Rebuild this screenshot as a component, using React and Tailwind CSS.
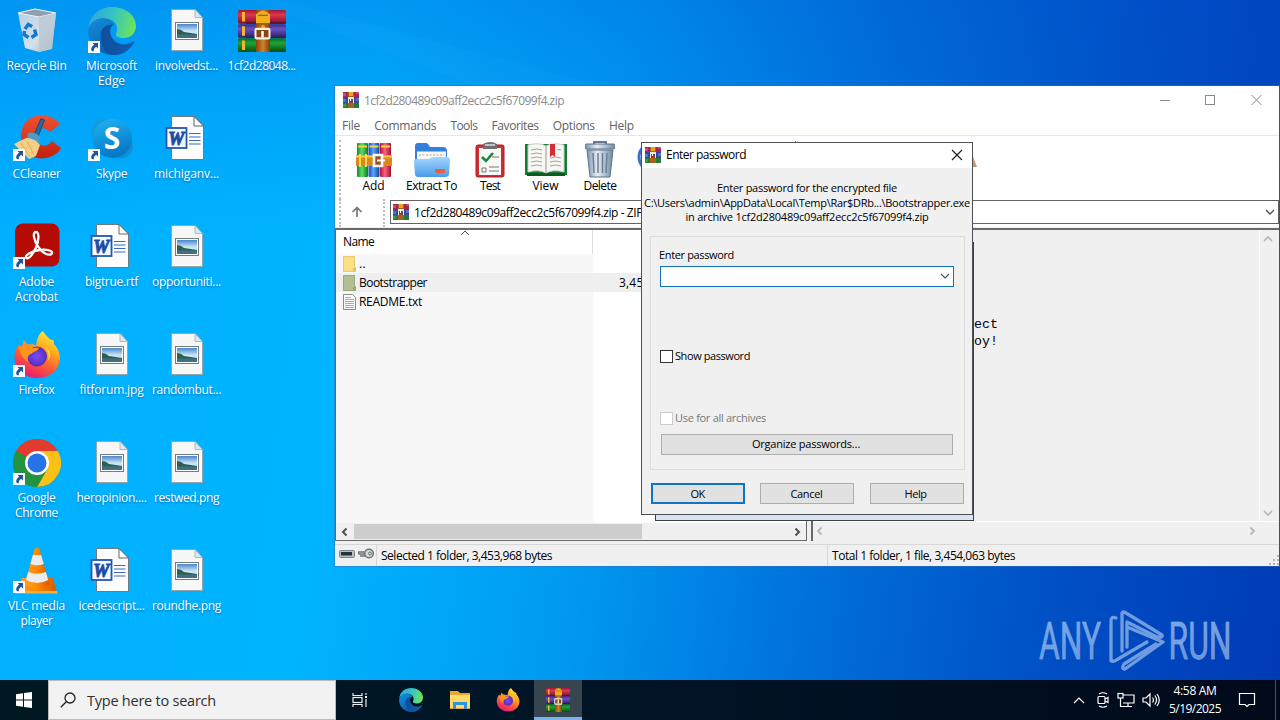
import React, { useLayoutEffect, useRef } from "react";

/* Single line of text whose tracking is adjusted to fill a given width. */
function Fit({ w, children, className = "" }) {
  const ref = useRef(null);
  useLayoutEffect(() => {
    const el = ref.current;
    el.style.letterSpacing = "0px";
    const natural = el.getBoundingClientRect().width;
    el.style.letterSpacing = `${(w - natural) / children.length}px`;
  }, [w, children]);
  return (
    <span className={`inline-block whitespace-pre ${className}`}>
      <span ref={ref}>{children}</span>
    </span>
  );
}

function Books({ className }) {
  return (
    <svg viewBox="0 0 48 40" preserveAspectRatio="none" className={className}>
      <defs>
        <linearGradient id="bkR" x2="0" y2="1"><stop stopColor="#a01838" /><stop offset=".35" stopColor="#e0364f" /><stop offset="1" stopColor="#7c0f2a" /></linearGradient>
        <linearGradient id="bkB" x2="0" y2="1"><stop stopColor="#3d2a80" /><stop offset=".35" stopColor="#6a50c0" /><stop offset="1" stopColor="#2c1c66" /></linearGradient>
        <linearGradient id="bkG" x2="0" y2="1"><stop stopColor="#0c6a1c" /><stop offset=".35" stopColor="#1fa63a" /><stop offset="1" stopColor="#064a12" /></linearGradient>
        <linearGradient id="belt" x2="1" y2="0"><stop stopColor="#8a460c" /><stop offset=".5" stopColor="#d1802c" /><stop offset="1" stopColor="#7e3c0a" /></linearGradient>
      </defs>
      <rect width="48" height="13" rx="1.500" fill="url(#bkR)" />
      <rect y="13.500" width="48" height="13" rx="1.500" fill="url(#bkB)" />
      <rect y="27" width="48" height="13" rx="1.500" fill="url(#bkG)" />
      <path d="M5.500 2v9M5.500 15.500v9M5.500 29v9" stroke="#f2b632" strokeWidth="3" />
      <path d="M8 12.500h40M8 26h40" stroke="#1b1433" strokeWidth="1" opacity=".7" />
      <rect x="18" width="14" height="40" fill="url(#belt)" />
      <path d="M18 4q7-6 14 0v9H18z" fill="#efb01e" />
      <path d="M20 5h10M18 13h14" stroke="#8a4a0c" />
      <circle cx="25" cy="16" r="2.500" fill="#e8a01a" stroke="#8a4a0c" strokeWidth=".8" />
      <rect x="17.500" y="18" width="14" height="9" rx="1" fill="#8c4510" stroke="#f6f1e6" strokeWidth="2" />
      <path d="M24.500 20v6" stroke="#fff" strokeWidth="2.500" />
    </svg>
  );
}

function MiniBooks({ className }) {
  return (
    <svg viewBox="0 0 16 16" className={className} shapeRendering="crispEdges">
      <rect width="16" height="5" fill="#a32552" />
      <rect y="5" width="16" height="6" fill="#34489f" />
      <rect y="11" width="16" height="5" fill="#247b35" />
      <path d="M0 1h3v3H0zM13 0h3v2h-3z" fill="#d84862" />
      <path d="M0 7h3v3H0zM13 6h3v3h-3z" fill="#5c70c9" />
      <path d="M0 12h3v3H0z" fill="#3a9a44" />
      <rect x="5" width="6" height="16" fill="#a9621d" />
      <rect x="6" width="4" height="4" fill="#e9a51f" />
      <path d="M5 5h6v6H5z" fill="#efe9df" />
      <rect x="6" y="7" width="4" height="4" fill="#7b4235" />
      <rect x="7" y="6" width="1" height="3" fill="#fff" />
    </svg>
  );
}

function Shortcut() {
  return (
    <svg viewBox="0 0 12 12" className="absolute bottom-0.5 left-0 h-3 w-3">
      <rect width="12" height="12" fill="#fbfbfb" />
      <path d="M4.500 2h5.500v5.500L8.200 5.800C6.300 7 5.600 8.400 5.700 10.500L3.500 9.800C2.600 7.400 3.700 5.200 6.200 3.700z" fill="#22549c" />
    </svg>
  );
}

function Bin() {
  return (
    <svg viewBox="0 0 48 48" className="h-12 w-12">
      <defs><linearGradient id="binG" x2="1" y2="1"><stop stopColor="#c3d3e0" /><stop offset=".6" stopColor="#e3e6e9" /><stop offset="1" stopColor="#a9b2bc" /></linearGradient></defs>
      <path d="M5 6l17-4 21 4-4 36-13 3-14-4z" fill="url(#binG)" opacity=".93" />
      <path d="M5 6l17-4 21 4-17 4z" fill="#8f9faf" stroke="#eef3f7" strokeWidth="1.200" />
      <path d="M26 10l0 35 13-3 4-36z" fill="#b9c5d0" opacity=".75" />
      <g fill="none" stroke="#1479d0" strokeWidth="3.400">
        <path d="M12 22l3.200-4.500 4 2" /><path d="M21.500 22.500l1.500 5-4.500 3" /><path d="M15.500 30.500l-4.500-3 .5-3.500" />
      </g>
    </svg>
  );
}

function Edge({ className = "h-12 w-12" }) {
  return (
    <svg viewBox="0 0 48 48" className={className}>
      <defs>
        <linearGradient id="eT" x1="0" y1=".3" x2="1" y2=".5"><stop stopColor="#2fa6dd" /><stop offset=".5" stopColor="#38c3c2" /><stop offset="1" stopColor="#6be45a" /></linearGradient>
        <linearGradient id="eL" x2=".7" y2="1"><stop stopColor="#1390dc" /><stop offset="1" stopColor="#0a58a8" /></linearGradient>
        <linearGradient id="eD" x2="1" y2="0"><stop stopColor="#0d4f9d" /><stop offset="1" stopColor="#155cae" /></linearGradient>
      </defs>
      <path d="M.5 21C1.500 8 12 0 24.500 0 38 0 48 9 48 19c0 7-5 12-12 12-6 0-9-2-8-4.500 3-5 .5-12-6-14C14 10 4 13 .5 21z" fill="url(#eT)" />
      <path d="M.3 22C4 12 14 9 21 12.500c4 2 5.500 4 5.500 5.500-7-1-9 7-6 13 3 8 10 12 20 10C34 48 26 49 20 47.500 6 44-1 33 .3 22z" fill="url(#eL)" />
      <path d="M13 26c1-6 7-9 13-8-7 3-4 15 5 18.500 5 2 10 .5 14-2 1-.5 2 .5 1 1.500C41 44 33 49 24 48c-8-2-12-12-11-22z" fill="url(#eD)" />
    </svg>
  );
}

function Pic() {
  return (
    <svg viewBox="0 0 48 48" className="h-12 w-12">
      <defs><linearGradient id="sky" x2="0" y2="1"><stop stopColor="#4a86cc" /><stop offset=".5" stopColor="#c9e4f4" /></linearGradient></defs>
      <path d="M8.500 2.500H32l7.500 8V43.500h-31z" fill="#f7f7f7" stroke="#9a9a9a" strokeWidth=".8" />
      <path d="M32 2.500v8h7.500z" fill="#d5ebf6" stroke="#a9a9a9" strokeWidth=".8" />
      <rect x="12.500" y="15.500" width="23" height="17" fill="#fff" stroke="#727c85" />
      <rect x="14" y="17" width="20" height="14" fill="url(#sky)" />
      <path d="M14 22q4 0 7 3l13 2V28H14z" fill="#2e6049" /><path d="M14 27.500h20V31H14z" fill="#426f88" />
    </svg>
  );
}

function Word() {
  return (
    <svg viewBox="0 0 48 48" className="h-12 w-12">
      <path d="M8.500 1.500H31l9.500 9.500v33.500h-32z" fill="#fcfcfc" stroke="#6d7074" strokeWidth=".9" />
      <path d="M31 1.500V11h9.500z" fill="#fff" stroke="#555" strokeWidth=".9" />
      <path d="M26 18.500h11.500M26 22h11.500M26 25.500h11.500M26 29h11.500" stroke="#3b6bbd" strokeWidth="1.200" />
      <rect x="3.500" y="13" width="20" height="20" fill="#f4f8ff" stroke="#2457ac" strokeWidth="1.800" />
      <text x="13.200" y="29.500" textAnchor="middle" fontFamily="Liberation Serif, serif" fontWeight="700" fontStyle="italic" fontSize="18" fill="#1d4da3" stroke="#1d4da3" strokeWidth="1">W</text>
    </svg>
  );
}

function CCleaner() {
  return (
    <svg viewBox="0 0 48 48" className="h-12 w-12">
      <defs><linearGradient id="ccR" x2="0" y2="1"><stop stopColor="#f0512f" /><stop offset="1" stopColor="#c2200f" /></linearGradient></defs>
      <path d="M47 9C37-4 13-3 9 15c-4 18 8 31 24 28 6-1.500 12-4 15-10l-9-7c-5 8-16 5-16-4s9-12 14-5z" fill="url(#ccR)" />
      <path d="M28 3.500l3.500 1.500-7 18-4-2z" fill="#276a9d" stroke="#174a78" />
      <path d="M15 18q7-2 12 4l-1 6-12-4z" fill="#4a9bc9" />
      <path d="M1 29l12-6q9 0 14 7l-4 11-7 3z" fill="#f5cf86" /><path d="M8 28l9 14M14 26l7 14" stroke="#e2ad58" fill="none" />
    </svg>
  );
}

function Skype() {
  return (
    <svg viewBox="0 0 48 48" className="h-12 w-12">
      <defs><linearGradient id="skG" x2=".3" y2="1"><stop stopColor="#1fb4f2" /><stop offset="1" stopColor="#0679c6" /></linearGradient></defs>
      <circle cx="16" cy="16" r="12.500" fill="#159ade" /><circle cx="32.500" cy="31" r="12.500" fill="#128fd5" />
      <circle cx="24.500" cy="23.500" r="19.500" fill="url(#skG)" />
      <text x="24" y="34" textAnchor="middle" fontFamily="Open Sans, sans-serif" fontWeight="700" fontSize="30" fill="#fff">S</text>
    </svg>
  );
}

function Acrobat() {
  return (
    <svg viewBox="0 0 48 48" className="h-12 w-12">
      <rect x="2" y=".5" width="44.500" height="43" rx="8" fill="#b40c04" />
      <path d="M23 9c-4 0-2 9 2.500 15 3.500 6 10 9 13 7 2.500-3-4-5-12-4S12 32 13 34.500c2 3 7-3 10-10s3.500-15.500 0-15.500z" fill="none" stroke="#fff" strokeWidth="2.300" strokeLinejoin="round" />
    </svg>
  );
}

function Firefox({ className = "h-12 w-12" }) {
  return (
    <svg viewBox="0 0 48 48" className={className}>
      <defs>
        <linearGradient id="ffG" x1=".8" y1="0" x2=".3" y2="1"><stop stopColor="#fff044" /><stop offset=".35" stopColor="#ffa91f" /><stop offset=".65" stopColor="#ff5a35" /><stop offset="1" stopColor="#e8157c" /></linearGradient>
        <radialGradient id="ffP"><stop stopColor="#7a4bf5" /><stop offset="1" stopColor="#5a2cb8" /></radialGradient>
      </defs>
      <path d="M30 0c3 5 5 6 8 9 3-1 3 2 3 4 5 5 6 11 6 15-1 12-11 19-22.500 19S2 40 1.500 27c0-6 2-11 5-14 .5 2 1 2 2 3L11 9q2 4 5 4.500c3-.5 5 0 7 1C24 9 25 3 30 0z" fill="url(#ffG)" />
      <circle cx="24" cy="25.500" r="10" fill="url(#ffP)" />
      <path d="M6 17c5-4 11-3 14 0l6-.5c-1 4-6 4-7 6-5 1-5 6-3 9-5-3-9-8-10-14.500z" fill="#ff941d" />
      <path d="M31 16c5 3 5 9 4 14 4-6 2-13-4-14z" fill="#ffd93c" />
    </svg>
  );
}

function Chrome() {
  return (
    <svg viewBox="0 0 48 48" className="h-12 w-12">
      <circle cx="24" cy="24" r="24" fill="#24933f" />
      <path d="M24 24L3.200 12A24 24 0 0144.800 12z" fill="#e33b2e" />
      <path d="M24 24V12h20.800A24 24 0 0124 48l10.400-18z" fill="#fbc116" />
      <path d="M13.600 30L3.200 12A24 24 0 0024 48l10.400-18z" fill="#24933f" />
      <circle cx="24" cy="24" r="12" fill="#fff" /><circle cx="24" cy="24" r="9.500" fill="#2673e8" />
    </svg>
  );
}

function Vlc() {
  return (
    <svg viewBox="0 0 48 48" className="h-12 w-12">
      <defs><linearGradient id="vO" x2="1" y2="0"><stop stopColor="#ffa02c" /><stop offset=".5" stopColor="#ff8800" /><stop offset="1" stopColor="#d95800" /></linearGradient></defs>
      <path d="M9 31h31l4 15H3z" fill="url(#vO)" />
      <path d="M21.500 2q2.500-3 5 0l10 36q-12 6-25 0z" fill="url(#vO)" />
      <path d="M19.900 8h8.200l2.700 9q-6.500 2.500-13.400 0zM15.200 25q9 3.500 17.700 0l2.300 8q-11 6-22.300 0z" fill="#ececec" />
      <path d="M3 44h41l.5 2.500H2z" fill="#ffb03c" />
    </svg>
  );
}

const items = [
  [Bin, [["Recycle Bin", 60]]],
  [CCleaner, [["CCleaner", 48]], true],
  [Acrobat, [["Adobe", 35], ["Acrobat", 43]], true],
  [Firefox, [["Firefox", 36]], true],
  [Chrome, [["Google", 38], ["Chrome", 43]], true],
  [Vlc, [["VLC media", 57], ["player", 32]], true],
  [Edge, [["Microsoft", 51], ["Edge", 27]], true],
  [Skype, [["Skype", 31]], true],
  [Word, [["bigtrue.rtf", 53]]],
  [Pic, [["fitforum.jpg", 64]]],
  [Pic, [["heropinion....", 70]]],
  [Word, [["icedescript...", 66]]],
  [Pic, [["involvedst...", 63]]],
  [Word, [["michiganv...", 65]]],
  [Pic, [["opportuniti...", 69]]],
  [Pic, [["randombut...", 69]]],
  [Pic, [["restwed.png", 65]]],
  [Pic, [["roundhe.png", 69]]],
  [null, [["1cf2d28048...", 68]]],
];

function DesktopItem({ item }) {
  const [Icon, lines, shortcut] = item;
  return (
    <div className="flex flex-col items-center">
      <div className="relative flex h-12 w-12 items-center justify-center">
        {Icon ? <Icon /> : <Books className="h-[42px] w-12" />}
        {shortcut && <Shortcut />}
      </div>
      <div className="mt-[3px] flex flex-col items-center text-[12px] leading-[15px] text-white [text-shadow:0_1px_2px_rgba(0,40,90,0.5)]">
        {lines.map(([t, w]) => <Fit key={t} w={w}>{t}</Fit>)}
      </div>
    </div>
  );
}

function Chevron({ d, color = "#505050", className = "h-2.5 w-2.5", sw = 1.6 }) {
  const paths = { left: "M6.500 1.500L3 5l3.500 3.500", right: "M3.500 1.500L7 5 3.500 8.500", up: "M1 7l4-4 4 4", down: "M1 3l4 4 4-4" };
  return <svg viewBox="0 0 10 10" className={className}><path d={paths[d]} fill="none" stroke={color} strokeWidth={sw} /></svg>;
}

function AddIcon() {
  return (
    <svg viewBox="0 0 36 36" className="h-9 w-9">
      <defs>
        <linearGradient id="aG" x2="1" y2="0"><stop stopColor="#108a2a" /><stop offset=".45" stopColor="#5cdc6a" /><stop offset="1" stopColor="#0c7a24" /></linearGradient>
        <linearGradient id="aB" x2="1" y2="0"><stop stopColor="#1450b4" /><stop offset=".45" stopColor="#59a4ff" /><stop offset="1" stopColor="#123f98" /></linearGradient>
        <linearGradient id="aR" x2="1" y2="0"><stop stopColor="#a81537" /><stop offset=".45" stopColor="#ff627d" /><stop offset="1" stopColor="#9c1030" /></linearGradient>
      </defs>
      <rect x="1" y="1" width="11" height="34" rx="1" fill="url(#aG)" /><rect x="12.500" y="1" width="11" height="34" rx="1" fill="url(#aB)" /><rect x="24" y="1" width="11" height="34" rx="1" fill="url(#aR)" />
      <path d="M2 4.500h9M13.500 4.500h9M25 4.500h9" stroke="#f7d446" strokeWidth="2" />
      <rect y="13" width="36" height="11" fill="#d98a17" /><path d="M0 14.500h36" stroke="#ffc74f" strokeWidth="2" />
      <path d="M4 12v13M10 12v13" stroke="#ffd75a" strokeWidth="2" />
      <path d="M26 13h-8v11h8z" fill="#985410" stroke="#f7f7f7" strokeWidth="2.600" /><path d="M21 18.500h8" stroke="#fff" strokeWidth="2" />
    </svg>
  );
}
function ExtractIcon() {
  return (
    <svg viewBox="0 0 36 36" className="h-9 w-9">
      <defs><linearGradient id="xF" x2="0" y2="1"><stop stopColor="#a4d6fd" /><stop offset="1" stopColor="#4a9bed" /></linearGradient></defs>
      <path d="M1 4q0-3 3-3h8q2 0 4 4h13q4 0 4 4v10H1z" fill="#367fdc" />
      <rect x="3" y="9.500" width="29" height="14" fill="#f7f7f5" /><path d="M5 13h25" stroke="#aaa" strokeDasharray="2 1.500" />
      <path d="M0 19q0-2 3-2h12l4-2h14q3 0 3 3l-1 14q0 3-4 3H4q-3 0-3-3z" fill="url(#xF)" />
      <rect x="21" y="27" width="10" height="4" rx="1" fill="#e8603a" />
    </svg>
  );
}
function TestIcon() {
  return (
    <svg viewBox="0 0 30 36" className="h-9 w-[30px]">
      <rect x="1" y="3" width="28" height="32" rx="2" fill="#d02d32" stroke="#a91c24" /><path d="M4 6h22v27H4z" fill="#f8f8f6" />
      <path d="M8 2q7-4 14 0v5H8z" fill="#6d6d72" /><path d="M10 3h10" stroke="#ddd" strokeWidth="1.500" />
      <path d="M7 15l4 4 7-8" fill="none" stroke="#16853e" strokeWidth="2.500" />
      <path d="M17 15h7M7 26h4v4H7zM14 25h10M14 29h10" stroke="#777" fill="none" />
    </svg>
  );
}
function ViewIcon() {
  return (
    <svg viewBox="0 0 42 36" className="h-9 w-[42px]">
      <path d="M0 2h42v31H0z" fill="#167a33" /><path d="M2 31h38v3H2z" fill="#0b5a22" />
      <path d="M3 3q11-3 18 1 7-4 18-1v27q-11-3-18 1-7-4-18-1z" fill="#f7f6f0" stroke="#ccc" /><path d="M21 4v27" stroke="#999" />
      <path d="M6 8q6-2 11 0M6 12q6-2 11 0M6 16q6-2 11 0M6 20q6-2 11 0M6 24q6-2 11 0M25 16q6-2 11 0M25 20q6-2 11 0M25 24q6-2 11 0M32 8q2-1 4 0" stroke="#a5a5a5" fill="none" />
      <path d="M25 2h5v13l-2.500-2-2.500 2z" fill="#d52b36" />
    </svg>
  );
}
function TrashIcon() {
  return (
    <svg viewBox="0 0 30 37" className="h-[37px] w-[30px]">
      <defs><linearGradient id="tr" x2="1" y2="0"><stop stopColor="#7d93ab" /><stop offset=".4" stopColor="#e6eef5" /><stop offset="1" stopColor="#718aa2" /></linearGradient></defs>
      <path d="M9 4V1h12v3" fill="none" stroke="#65788d" strokeWidth="2" />
      <rect y="3" width="30" height="5" rx="1.500" fill="url(#tr)" stroke="#5c7086" />
      <path d="M2 9h26l-3 27H5z" fill="url(#tr)" stroke="#5e7389" />
      <path d="M8 12l1 20M13 12v20M17.500 12v20M22 12l-1 20" stroke="#6b8095" strokeWidth="1.500" />
    </svg>
  );
}
function FindIcon() {
  return (
    <svg viewBox="0 0 38 36" className="h-9 w-[38px]">
      <circle cx="16" cy="15" r="14" fill="#dcecfb" stroke="#3f6fcb" strokeWidth="3" /><path d="M25 24l9 9" stroke="#444" strokeWidth="4" />
    </svg>
  );
}

const tools = [
  ["w-[57px]", AddIcon, "Add", 22], ["w-[59px]", ExtractIcon, "Extract To", 51], ["w-[58px]", TestIcon, "Test", 20],
  ["w-[53px]", ViewIcon, "View", 26], ["w-[56px]", TrashIcon, "Delete", 33], ["w-[55px]", FindIcon, "Find", 22],
];

const menus = [["File", 18], ["Commands", 62], ["Tools", 27], ["Favorites", 47], ["Options", 42], ["Help", 25]];

function ArchiveWindow() {
  return (
    <section className="absolute left-[335px] top-[86px] flex h-[480px] w-[944px] flex-col bg-white text-[12px] text-black outline-1 outline-[#2f6fae]/50">
      <header className="flex h-[29px] items-center pl-2 text-[#8b8b8b]">
        <MiniBooks className="mb-0.5 h-4 w-4" />
        <Fit w={200} className="ml-[5px]">1cf2d280489c09aff2ecc2c5f67099f4.zip</Fit>
        <svg viewBox="0 0 104 12" className="mb-0.5 ml-auto mr-[17px] h-3 w-[104px]" fill="none" stroke="#8a8a8a">
          <path d="M2 6.500h10M93.500 1l10 10M103.500 1l-10 10" /><rect x="47.500" y="1.500" width="9" height="9" />
        </svg>
      </header>
      <nav className="flex h-[20px] items-center gap-[14.2px] pl-[7px] pt-0.5 text-[#626262]">
        {menus.map(([t, w]) => <Fit key={t} w={w}>{t}</Fit>)}
      </nav>
      <div className="flex h-[64px] border-t border-[#e8e8e8] pl-[4px]">
        <div className="mr-[4px] mt-1 w-px border-l-2 border-dotted border-[#bdbdbd]" />
        {tools.map(([cls, Icon, t, w]) => (
          <div key={t} className={`flex shrink-0 flex-col items-center pt-[5px] ${cls}`}>
            <div className="flex h-[37px] items-center"><Icon /></div>
            <Fit w={w} className="leading-[16px]">{t}</Fit>
          </div>
        ))}
        <div className="ml-[112px] mt-[5px] h-14 w-px bg-[#777]" />
        <svg viewBox="0 0 36 36" className="ml-[145px] mt-[9px] h-9 w-9"><path d="M18 1h10l8 21H10z" fill="#cf946b" /></svg>
      </div>
      <div className="flex h-[28px] pl-[4px]">
        <div className="w-px border-l-2 border-dotted border-[#bdbdbd]" />
        <div className="flex w-[42px] pl-[10px] pt-[7px]">
          <svg viewBox="0 0 12 12" className="h-3 w-3"><path d="M6 11V2M1.500 6L6 1.500 10.500 6" fill="none" stroke="#777" strokeWidth="1.700" /></svg>
        </div>
        <div className="w-px border-l-2 border-dotted border-[#bdbdbd]" />
        <div className="ml-[5px] mt-px flex h-[24px] grow items-center border border-[#646464] pl-0.5">
          <MiniBooks className="mb-px h-4 w-4" />
          <Fit w={229} className="ml-[5px] pt-0.5">1cf2d280489c09aff2ecc2c5f67099f4.zip - ZIP</Fit>
          <Chevron d="down" className="ml-auto mr-[3px] h-2.5 w-2.5" sw={1.3} />
        </div>
      </div>
      <div className="flex h-[317px] gap-[4px] bg-[#f0f0f0] pb-[3px] pt-px">
        <div className="flex w-[472px] flex-col border border-t-2 border-[#696969] bg-white">
          <div className="flex h-6">
            <div className="relative flex w-[257px] items-center border-r border-[#dedede] pl-[7px]">
              <Fit w={31}>Name</Fit>
              <Chevron d="up" className="absolute -top-0.5 left-[124px] h-2.5 w-2.5" sw={1} color="#555" />
            </div>
          </div>
          <div className="flex grow">
            <div className="w-[257px] bg-[#f7f7f7]">
              <div className="flex h-[19px] items-center pl-[7px]">
                <svg viewBox="0 0 13 16" className="h-4 w-[13px]"><path d="M.5.5h11v11h1v4H.5z" fill="#fbdf87" stroke="#ecca6b" /><path d="M10 12h3v3h-3z" fill="#eac05a" /></svg>
                <Fit w={7} className="ml-[3px]">..</Fit>
              </div>
              <div className="flex h-[19px] items-center bg-[#efefef] pl-[7px]">
                <svg viewBox="0 0 13 16" className="h-4 w-[13px]"><path d="M.5.5h11v11h1v4H.5z" fill="#b1bf91" stroke="#98a97c" /><path d="M10 12h3v3h-3z" fill="#99a76c" /></svg>
                <Fit w={68} className="ml-[3px]">Bootstrapper</Fit>
              </div>
              <div className="flex h-[19px] items-center pl-[7px]">
                <svg viewBox="0 0 13 16" className="h-4 w-[13px]"><path d="M.5.5h9l3 3v12H.5z" fill="#fafafa" stroke="#8a8a8a" /><path d="M2 3.500h6M2 5.500h9M2 7.500h9M2 9.500h9M2 11.500h9M2 13.500h9" stroke="#a4adb6" /></svg>
                <Fit w={63} className="ml-[3px]">README.txt</Fit>
              </div>
            </div>
            <div className="grow pt-[19px]">
              <div className="flex h-[19px] items-center bg-[#efefef] pl-[26px]"><Fit w={56}>3,453,968</Fit></div>
            </div>
          </div>
          <div className="flex h-[17px] items-center bg-[#f0f0f0]">
            <div className="flex w-[18px] justify-center"><Chevron d="left" sw={2} /></div>
            <div className="h-[15px] w-[288px] bg-[#cdcdcd]" />
            <Chevron d="right" sw={2} className="ml-auto mr-1 h-2.5 w-2.5" />
          </div>
        </div>
        <div className="flex grow flex-col border-l-2 border-t-2 border-[#696969] bg-[#f0f0f0]">
          <div className="flex grow">
            <div className="grow border-r border-white pl-[161px] pt-[86px] font-['Liberation_Mono',monospace] text-[13.3px] leading-[17px]">
              <div>ect</div><div>oy!</div>
            </div>
            <div className="flex w-[19px] flex-col items-center justify-between pb-[3px] pr-1 pt-1">
              <Chevron d="up" color="#b5b5b5" /><Chevron d="down" color="#b5b5b5" />
            </div>
          </div>
          <div className="flex h-[20px] items-center justify-between border-t border-white pb-0.5 pl-[2px] pr-[22px]">
            <Chevron d="left" color="#b5b5b5" sw={1.8} /><Chevron d="right" color="#b5b5b5" sw={1.8} />
          </div>
        </div>
      </div>
      <footer className="flex h-[22px] items-center border-t border-[#d7d7d7] bg-[#f0f0f0]">
        <div className="flex h-full w-[42px] items-center gap-[3px] border-r border-[#d7d7d7] pb-1 pl-1">
          <svg viewBox="0 0 16 8" className="h-2 w-4"><rect x=".5" y=".5" width="15" height="7" rx="1" fill="#b9c0c5" stroke="#7c8489" /><rect x="2" y="2" width="11" height="3.500" fill="#26313a" /></svg>
          <svg viewBox="0 0 16 11" className="h-[11px] w-4" fill="none" stroke="#6d7478"><circle cx="11" cy="5.500" r="4.300" strokeWidth="1.500" fill="#d8d8d8" /><circle cx="12" cy="5.500" r="1.500" /><path d="M6.500 4H0l1 2h5.500M2 8h5" strokeWidth="1.300" /></svg>
        </div>
        <div className="flex h-full w-[451px] items-center border-r border-[#d7d7d7] pl-[4px]"><Fit w={171}>Selected 1 folder, 3,453,968 bytes</Fit></div>
        <Fit w={183} className="ml-[4px]">Total 1 folder, 1 file, 3,454,063 bytes</Fit>
        <svg viewBox="0 0 10 10" className="ml-auto mt-2 h-2.5 w-2.5 fill-[#b5b5b5]"><path d="M8 0h2v2H8zM4 4h2v2H4zM8 4h2v2H8zM0 8h2v2H0zM4 8h2v2H4zM8 8h2v2H8z" /></svg>
      </footer>
    </section>
  );
}

function PasswordDialog() {
  return (
    <section className="absolute left-[641px] top-[142px] flex h-[373px] w-[332px] flex-col border border-[#4b5157] bg-[#f0f0f0] text-[11px] text-black">
      <header className="flex h-[25px] shrink-0 items-center bg-white pl-[3px] text-[12px]">
        <MiniBooks className="mb-px h-4 w-4" />
        <Fit w={80} className="mb-0.5 ml-[5px]">Enter password</Fit>
        <svg viewBox="0 0 12 12" className="mb-0.5 ml-auto mr-[9px] h-3 w-3"><path d="M1 1l10 10M11 1L1 11" stroke="#222" strokeWidth="1.200" /></svg>
      </header>
      <div className="mt-[13px] flex flex-col items-center leading-[14.5px]">
        <Fit w={180}>Enter password for the encrypted file</Fit>
        <Fit w={326}>C:\Users\admin\AppData\Local\Temp\Rar$DRb...\Bootstrapper.exe</Fit>
        <Fit w={243}>in archive 1cf2d280489c09aff2ecc2c5f67099f4.zip</Fit>
      </div>
      <div className="ml-2 mr-[7px] mt-[11px] flex h-[234px] shrink-0 flex-col border border-[#dcdcdc] pl-2 pr-[10px] pt-[10px]">
        <Fit w={75} className="leading-[15px]">Enter password</Fit>
        <div className="ml-px mt-[4px] flex h-[21px] w-[294px] shrink-0 items-center justify-end border border-[#1272c0] bg-white pr-[3px]">
          <Chevron d="down" sw={1.2} />
        </div>
        <div className="ml-px mt-[62px] flex h-[15px] items-center gap-[2px]">
          <div className="h-[13px] w-[13px] border border-[#333] bg-white" /><Fit w={75}>Show password</Fit>
        </div>
        <div className="ml-px mt-[47px] flex h-[15px] items-center gap-[2px] text-[#777]">
          <div className="h-[13px] w-[13px] border border-[#ccc] bg-white" /><Fit w={91}>Use for all archives</Fit>
        </div>
        <button className="ml-[2px] mt-[8px] flex h-[21px] w-[292px] shrink-0 items-center justify-center border border-[#adadad] bg-[#e1e1e1] pr-0.5"><Fit w={108}>Organize passwords…</Fit></button>
      </div>
      <div className="mt-[13px] flex gap-[15px] pl-[9px]">
        <button className="flex h-[21px] w-[94px] items-center justify-center border-2 border-[#0f74c4] bg-[#e1e1e1] pr-px pt-0.5"><Fit w={14}>OK</Fit></button>
        <button className="flex h-[21px] w-[94px] items-center justify-center border border-[#adadad] bg-[#e1e1e1] pr-px pt-0.5"><Fit w={32}>Cancel</Fit></button>
        <button className="ml-px flex h-[21px] w-[94px] items-center justify-center border border-[#adadad] bg-[#e1e1e1] pr-[3px] pt-0.5"><Fit w={22}>Help</Fit></button>
      </div>
    </section>
  );
}

function Watermark() {
  return (
    <svg viewBox="0 0 200 64" className="absolute left-[1039px] top-[609px] h-16 w-[200px]">
      <defs><linearGradient id="wm" x2="0" y2="1"><stop stopColor="#a5cbf2" stopOpacity=".75" /><stop offset="1" stopColor="#a3bfee" stopOpacity=".62" /></linearGradient></defs>
      <g fill="url(#wm)" stroke="#8fb4ea" strokeOpacity=".6" strokeWidth=".9" fontFamily="Roboto, sans-serif" fontSize="52">
        <text x="0" y="50" textLength="62" lengthAdjust="spacingAndGlyphs">ANY</text>
        <text x="129.500" y="50" textLength="63" lengthAdjust="spacingAndGlyphs">RUN</text>
      </g>
      <g fill="none" stroke="#83ace5" strokeWidth="3.300" strokeLinejoin="round" strokeLinecap="round" opacity=".85">
        <path d="M83 42V4q1-2 4 0l36 22q1 3-5 2L88 13M83 17" />
        <path d="M88 14v24M88 18l36 15L86 60q-4 0-1-5l32-20" />
        <path d="M77 9q-5-2-5 3v40q3 1 7-2l29-17" />
      </g>
    </svg>
  );
}

function Taskbar() {
  return (
    <footer className="flex h-10 items-center bg-linear-to-r from-[#001822] via-[#011426] to-[#010a1b] text-white">
      <div className="flex w-12 justify-center"><svg viewBox="0 0 16 16" className="h-4 w-4" fill="#fff"><path d="M0 2.300L7 1.300v6.200H0zM8 1.100L16 0v7.500H8zM0 8.500h7v6.200l-7-1zM8 8.500h8V16L8 14.900z" /></svg></div>
      <div className="flex h-full w-[288px] items-center border border-[#bcbcbc] bg-[#f2f2f2] pl-[11px]">
        <svg viewBox="0 0 16 16" className="h-4 w-4" fill="none" stroke="#222" strokeWidth="1.300"><circle cx="10" cy="6" r="5" /><path d="M6.300 9.700L.8 15.200" /></svg>
        <Fit w={129} className="ml-[11px] pt-0.5 text-[14.5px] text-[#303030]">Type here to search</Fit>
      </div>
      <div className="flex w-12 justify-center"><svg viewBox="0 0 16 16" className="h-4 w-4" fill="none" stroke="#eee" strokeWidth="1.200"><path d="M1 1v2.500h9V1M1 15v-2.500h9V15M14 1v2M14 7v8" /><rect x="1" y="5.500" width="9" height="5" /><path d="M13 4h2v2h-2z" fill="#fff" stroke="none" /></svg></div>
      <div className="flex w-[54px] justify-center"><Edge className="h-6 w-6" /></div>
      <div className="flex w-11 justify-center">
        <svg viewBox="0 0 22 20" className="h-5 w-[22px]"><path d="M1 1h8l2 2h10v16H1z" fill="#e9a52c" /><path d="M1 5h20v13H1z" fill="#ffda69" /><path d="M4 19v-7h14v7h-3v-4H7v4z" fill="#3192dc" /></svg>
      </div>
      <div className="flex w-[52px] justify-center"><Firefox className="h-6 w-6" /></div>
      <div className="flex h-full w-12 items-center justify-center border-b-[3px] border-[#76b5e9] bg-[#36454f] pt-0.5"><Books className="h-6 w-6" /></div>
      <div className="ml-auto flex h-full items-center">
        <div className="flex items-center gap-[7px]">
          <svg viewBox="0 0 12 8" className="mr-1 h-2 w-3"><path d="M1 7l5-5 5 5" fill="none" stroke="#fff" strokeWidth="1.200" /></svg>
          <svg viewBox="0 0 14 16" className="h-4 w-3.5" fill="none" stroke="#fff" strokeWidth="1.200"><rect x="2" y="4.500" width="7" height="7" rx="1" /><path d="M9 7l3-1.500v5L9 9M3 2q4-2.500 8 0M3 14q4 2.500 8 0" /></svg>
          <svg viewBox="0 0 18 16" className="h-4 w-[18px]" fill="none" stroke="#fff" strokeWidth="1.200"><path d="M6 3h11v8H6M11 11v3M7 14.500h8M3.500 6v8.500H7" /><rect x="1" y="1.500" width="5" height="4.500" /></svg>
          <svg viewBox="0 0 18 16" className="h-4 w-[18px]" fill="none" stroke="#fff" strokeWidth="1.200"><path d="M1 6h3l4-4v12l-4-4H1zM10.500 5.500q2 2.500 0 5M12.800 3.500q3.500 4.500 0 9M15 2q4.500 6 0 12" /></svg>
        </div>
        <div className="ml-[9px] flex flex-col items-center text-[12px] leading-[18px]">
          <Fit w={43}>4:58 AM</Fit><Fit w={52}>5/19/2025</Fit>
        </div>
        <svg viewBox="0 0 18 18" className="ml-[17px] mr-[19px] h-[18px] w-[18px]"><path d="M1.500 2.500h15v11H11l-2 2-2-2H1.500z" fill="none" stroke="#fff" strokeWidth="1.200" /></svg>
        <div className="mr-[4px] h-full w-px bg-[#4a5563]" />
      </div>
    </footer>
  );
}

export default function App() {
  return (
    <main className="relative flex h-[720px] w-[1280px] flex-col overflow-hidden bg-[linear-gradient(98deg,#00b0ff_0%,#00b4ff_28%,#009cf2_46%,#0070da_65%,#0050c6_82%,#003ab6_100%)] font-['Open_Sans','Noto_Sans',sans-serif]">
      <svg viewBox="0 0 1280 680" className="absolute inset-0 h-[680px] w-[1280px]">
        <defs>
          <linearGradient id="topShade" x2="0" y2="1"><stop stopColor="#0050d0" stopOpacity=".28" /><stop offset="1" stopColor="#0068df" stopOpacity="0" /></linearGradient>
        </defs>
        <rect width="1280" height="240" fill="url(#topShade)" />
        <path d="M250 0l250 96H640L280 0z" fill="#25adff" opacity=".1" />
      </svg>
      <div className="relative -ml-px grid h-[680px] w-[300px] grid-flow-col grid-cols-[repeat(4,75px)] grid-rows-[repeat(6,108px)] pt-[7px]">
        {items.map((item, i) => <DesktopItem key={i} item={item} />)}
      </div>
      <Taskbar />
      <ArchiveWindow />
      <div className="absolute left-[655px] top-[242px] h-[279px] w-[319px] border border-[#3b4046] bg-[#dde2f1]" />
      <PasswordDialog />
      <Watermark />
    </main>
  );
}
